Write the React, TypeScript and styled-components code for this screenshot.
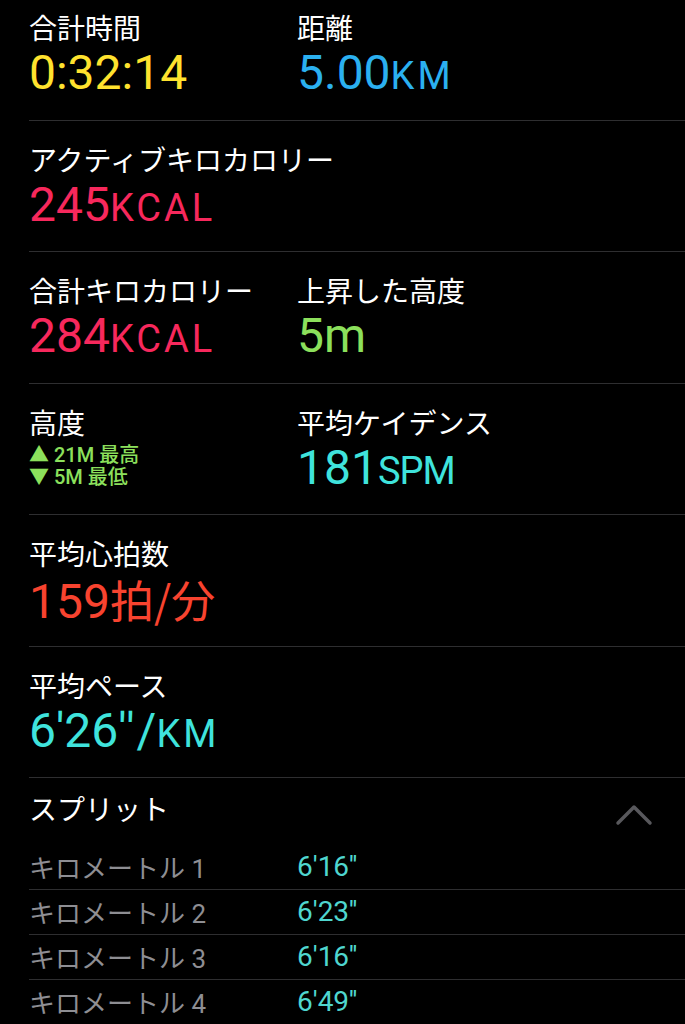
import styled, { createGlobalStyle } from "styled-components";

const GlobalStyle = createGlobalStyle`
  html, body {
    margin: 0;
    padding: 0;
    background: #000;
  }
  body {
    font-family: "Roboto", "Noto Sans CJK JP", sans-serif;
    color: #fff;
  }
`;

const Page = styled.div`
  width: 685px;
  height: 1024px;
  overflow: hidden;
  padding-left: 29px;
  box-sizing: border-box;
  background: #000;
`;

const Row = styled.div<{ $first?: boolean }>`
  display: grid;
  grid-template-columns: 268px 1fr;
  align-content: start;
  height: ${(p) => (p.$first ? "121px" : "131.4px")};
  padding-top: ${(p) => (p.$first ? "7px" : "18px")};
  box-sizing: border-box;
  border-bottom: 1px solid #2e2e30;
`;

const Cell = styled.div`
  display: flex;
  flex-direction: column;
`;

const Label = styled.div`
  font-family: "Noto Sans CJK JP", sans-serif;
  font-size: 28px;
  line-height: 40px;
  color: #fff;
  white-space: nowrap;
`;

const Value = styled.div<{ $color: string }>`
  font-family: "Roboto", "Noto Sans CJK JP", sans-serif;
  font-size: 48px;
  line-height: 56px;
  margin-top: -2px;
  color: ${(p) => p.$color};
  white-space: nowrap;
`;

const Unit = styled.span<{ $spacing?: number }>`
  font-size: 38px;
  letter-spacing: ${(p) => p.$spacing ?? 0}px;
`;

const Quote = styled.span`
  letter-spacing: 2px;
`;

const Jp = styled.span`
  font-family: "Noto Sans CJK JP", sans-serif;
  font-size: 44px;
`;

const AltLine = styled.div`
  font-family: "Roboto", "Noto Sans CJK JP", sans-serif;
  font-size: 20px;
  line-height: 22px;
  font-weight: 500;
  color: #8ce05c;
  white-space: nowrap;
`;

const AltBox = styled.div`
  margin-top: 2px;
`;

const SplitHeader = styled.div`
  display: flex;
  align-items: center;
  justify-content: space-between;
  height: 67px;
  padding-right: 32px;
  padding-top: 2px;
  box-sizing: border-box;
`;

const SplitTitle = styled.div`
  font-family: "Noto Sans CJK JP", sans-serif;
  font-size: 28px;
  color: #fff;
  margin-top: -8px;
`;

const Chevron = styled.svg`
  width: 38px;
  height: 22px;
  margin-top: 6px;
`;

const SplitRow = styled.div`
  display: grid;
  grid-template-columns: 268px 1fr;
  align-items: center;
  height: 45px;
  box-sizing: border-box;
  border-bottom: 1px solid #2e2e30;
`;

const SplitLabel = styled.div`
  font-family: "Roboto", "Noto Sans CJK JP", sans-serif;
  font-size: 26px;
  color: #8e8e93;
  white-space: nowrap;
`;

const SplitValue = styled.div`
  font-family: "Roboto", sans-serif;
  font-size: 28px;
  color: #4fd6cf;
`;

const splits = [
  { km: 1, pace: "6'16''" },
  { km: 2, pace: "6'23''" },
  { km: 3, pace: "6'16''" },
  { km: 4, pace: "6'49''" },
];

const App = () => {
  return (
    <>
      <GlobalStyle />
      <Page>
        <Row $first>
          <Cell>
            <Label>合計時間</Label>
            <Value $color="#ffe22e">0:32:14</Value>
          </Cell>
          <Cell>
            <Label>距離</Label>
            <Value $color="#2bb0f0">
              5.00<Unit $spacing={3}>KM</Unit>
            </Value>
          </Cell>
        </Row>
        <Row>
          <Cell>
            <Label>アクティブキロカロリー</Label>
            <Value $color="#f7285c">
              245<Unit $spacing={3}>KCAL</Unit>
            </Value>
          </Cell>
        </Row>
        <Row>
          <Cell>
            <Label>合計キロカロリー</Label>
            <Value $color="#f7285c">
              284<Unit $spacing={3}>KCAL</Unit>
            </Value>
          </Cell>
          <Cell>
            <Label>上昇した高度</Label>
            <Value $color="#8ce05c">5m</Value>
          </Cell>
        </Row>
        <Row>
          <Cell>
            <Label>高度</Label>
            <AltBox>
              <AltLine>▲ 21M 最高</AltLine>
              <AltLine>▼ 5M 最低</AltLine>
            </AltBox>
          </Cell>
          <Cell>
            <Label>平均ケイデンス</Label>
            <Value $color="#3fe3dc">
              181<Unit $spacing={-1}>SPM</Unit>
            </Value>
          </Cell>
        </Row>
        <Row>
          <Cell>
            <Label>平均心拍数</Label>
            <Value $color="#f8432f">
              159<Jp>拍/分</Jp>
            </Value>
          </Cell>
        </Row>
        <Row>
          <Cell>
            <Label>平均ペース</Label>
            <Value $color="#3fe3dc">
              6'26<Quote>''</Quote>/<Unit $spacing={3}>KM</Unit>
            </Value>
          </Cell>
        </Row>
        <SplitHeader>
          <SplitTitle>スプリット</SplitTitle>
          <Chevron viewBox="0 0 38 22">
            <polyline
              points="3,19 19,3 35,19"
              fill="none"
              stroke="#58585c"
              strokeWidth="3.5"
              strokeLinecap="round"
              strokeLinejoin="round"
            />
          </Chevron>
        </SplitHeader>
        {splits.map((s) => (
          <SplitRow key={s.km}>
            <SplitLabel>キロメートル {s.km}</SplitLabel>
            <SplitValue>{s.pace}</SplitValue>
          </SplitRow>
        ))}
      </Page>
    </>
  );
};

export default App;
